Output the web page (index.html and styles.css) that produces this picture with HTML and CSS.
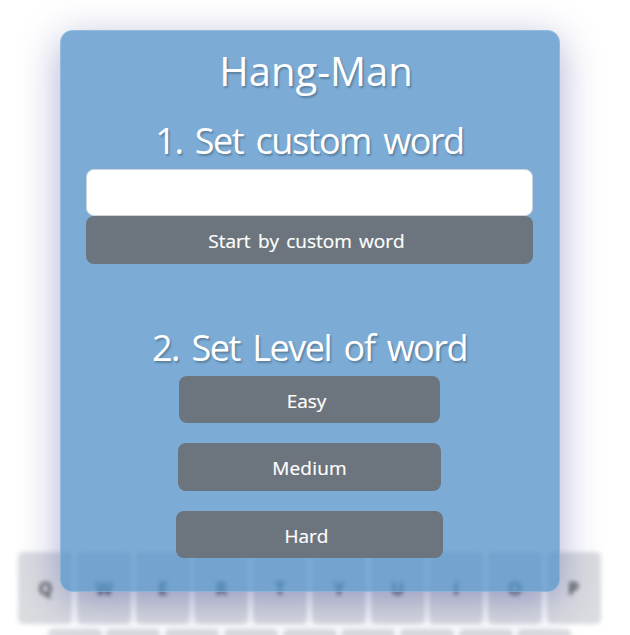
FILE: index.html
```html
<!DOCTYPE html>
<html lang="en">
<head>
<meta charset="utf-8">
<title>Hang-Man</title>
<link rel="stylesheet" href="styles.css">
</head>
<body>
<div class="keyboard">
  <div class="row"><span>Q</span><span>W</span><span>E</span><span>R</span><span>T</span><span>Y</span><span>U</span><span>I</span><span>O</span><span>P</span></div>
  <div class="row row-cut"><span></span><span></span><span></span><span></span><span></span><span></span><span></span><span></span><span></span></div>
</div>
<main class="modal">
  <h1 class="title">Hang-Man</h1>
  <h2 class="heading heading-custom">1. Set custom word</h2>
  <input class="word" type="text" aria-label="Custom word">
  <button class="btn start">Start by custom word</button>
  <h2 class="heading heading-level">2. Set Level of word</h2>
  <button class="btn easy">Easy</button>
  <button class="btn medium">Medium</button>
  <button class="btn hard">Hard</button>
</main>
</body>
</html>
```
FILE: styles.css
```css
* { box-sizing: border-box; }
body {
  margin: 0;
  height: 635px;
  position: relative;
  overflow: hidden;
  background: #fff;
  font-family: "Open Sans", "Noto Sans", sans-serif;
}
.keyboard {
  padding-top: 552px;
  width: 619px;
  height: 635px;
  display: flex;
  flex-direction: column;
  align-items: center;
  gap: 5px;
  filter: blur(2px);
}
.row { display: flex; gap: 4.7px; }
.row span {
  width: 54px;
  height: 72px;
  border-radius: 5px;
  background: #dadce0;
  color: #505056;
  display: flex;
  align-items: center;
  justify-content: center;
  font-size: 17.5px;
  font-weight: 700;
}
.row-cut { height: 12px; }
.row-cut span { height: 12px; border-radius: 5px 5px 0 0; }
.modal {
  position: absolute;
  left: 60px;
  top: 30px;
  width: 500px;
  height: 561.5px;
  padding-right: 1px;
  display: flex;
  flex-direction: column;
  align-items: center;
  border: 1px solid rgba(255, 255, 255, .18);
  border-radius: 12.5px;
  background: rgba(80, 144, 200, .75);
  box-shadow: 0 10px 40px rgba(31, 38, 135, .37);
  color: #fff;
}
.title, .heading {
  margin: 0;
  font-weight: 400;
  white-space: nowrap;
  text-shadow: 1.5px 1.5px 2px rgba(0, 0, 0, .26);
}
.title {
  margin-top: 15px;
  padding-left: 13px;
  font-size: 40px;
  line-height: 50px;
}
.heading {
  font-size: 36px;
  line-height: 44px;
  letter-spacing: -1.5px;
  word-spacing: 4.6px;
}
.heading-custom { margin-top: 23px; }
.heading-level { margin-top: 62px; }
.word {
  width: 447px;
  height: 47px;
  margin-top: 6px;
  border: 1px solid #ced4da;
  border-radius: 8px;
  background: #fff;
}
.btn {
  flex: none;
  padding: 2px 6px 0 0;
  border: 0;
  border-radius: 8px;
  background: #6c757d;
  color: #fff;
  font: 19px "Open Sans", "Noto Sans", sans-serif;
  -webkit-text-stroke: .2px #fff;
}
.start { width: 447px; height: 48px; word-spacing: 2.3px; }
.easy { width: 261px; height: 47px; margin-top: 6px; }
.medium { width: 263px; height: 48px; margin-top: 20px; padding-right: 0; letter-spacing: .2px; }
.hard { width: 267px; height: 47px; margin-top: 20px; }
```
